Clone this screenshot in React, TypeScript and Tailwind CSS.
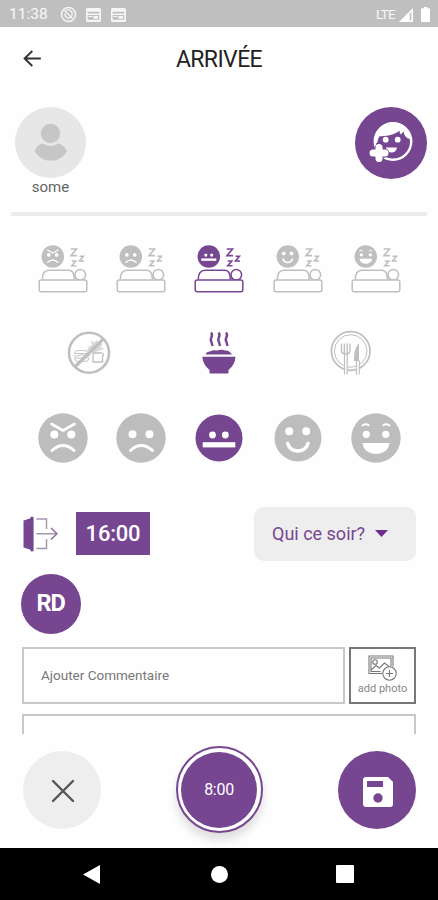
import { useState } from 'react';
import clsx from 'clsx';

type Humeur = 'fache' | 'triste' | 'neutre' | 'content' | 'joyeux';
type Repas = 'rien' | 'peu' | 'tout';

const humeurs: Humeur[] = ['fache', 'triste', 'neutre', 'content', 'joyeux'];
const repas: Repas[] = ['rien', 'peu', 'tout'];

// Traits du visage, dessines autour de (0, 0) dans un cercle de rayon 24
function Traits({ humeur }: { humeur: Humeur }) {
  const trait = { fill: 'none', stroke: 'white', strokeWidth: 3, strokeLinecap: 'round' as const };
  switch (humeur) {
    case 'fache':
      return (
        <>
          <path d="M-11.5-14 0-7.5 11.5-14" {...trait} strokeLinejoin="round" strokeWidth={2.6} />
          <circle cx="-8.7" cy="-3.5" r="4" fill="white" />
          <circle cx="8.3" cy="-3.5" r="4" fill="white" />
          <path d="M-11 12.5Q0 2.5 11 12.5" {...trait} />
        </>
      );
    case 'triste':
      return (
        <>
          <circle cx="-8.5" cy="-3.7" r="4" fill="white" />
          <circle cx="8.5" cy="-3.7" r="4" fill="white" />
          <path d="M-10.5 12.5Q0 2.5 11.5 12.5" {...trait} />
        </>
      );
    case 'neutre':
      return (
        <>
          <circle cx="-6.5" cy="-3" r="3.4" fill="white" />
          <circle cx="6.3" cy="-3" r="3.4" fill="white" />
          <rect x="-16.3" y="4.2" width="32.6" height="5.2" fill="white" />
        </>
      );
    case 'content':
      return (
        <>
          <circle cx="-8.8" cy="-6.7" r="4" fill="white" />
          <circle cx="8.2" cy="-6.7" r="4" fill="white" />
          <path d="M-10.3 5.5C-7 15.5 7 15.5 10 5.5" {...trait} strokeWidth={3.6} />
        </>
      );
    case 'joyeux':
      return (
        <>
          <path d="M-13.5-12.5Q-10.5-14.5-7.5-13M7.5-13Q10.5-14.5 13.5-12.5" {...trait} strokeWidth={2} />
          <circle cx="-9.7" cy="-3.7" r="3.6" fill="white" />
          <circle cx="9.8" cy="-3.7" r="3.6" fill="white" />
          <path d="M-13.5 5H13.5C12.5 19.5-12.5 19.5-13.5 5Z" fill="white" />
        </>
      );
  }
}

function Visage({ humeur }: { humeur: Humeur }) {
  const rayon = humeur === 'neutre' || humeur === 'content' ? 23.5 : 24.7;
  return (
    <svg className="size-[50px]" viewBox="-25 -25 50 50">
      <circle r={rayon} fill="currentColor" />
      <Traits humeur={humeur} />
    </svg>
  );
}

function Sommeil({ humeur }: { humeur: Humeur }) {
  return (
    <svg className="size-[50px]" viewBox="0 0 50 50" fill="none" stroke="currentColor" strokeWidth="1.5">
      <g transform="translate(14.8 12.5) scale(.46)" stroke="none">
        <circle r="24.5" fill="currentColor" />
        <Traits humeur={humeur} />
      </g>
      <path d="M32.8 5H38.5L33 11.6H39M41.5 12.2H45.4L41.5 17H46M33.8 17H37.8L33.8 21.8H38.5" strokeWidth="1.6" />
      <path d="M4.3 35.5C4.3 30 6.5 26.2 11 26.2H31C34.5 26.2 36.3 29 36.3 35.5" />
      <path d="M36.3 31Q37.5 32 38 35.5" strokeWidth="1" />
      <circle cx="42.3" cy="30.7" r="5.3" />
      <rect x="1.2" y="36" width="47.6" height="11.8" rx="2" fill="white" />
    </svg>
  );
}

function IconeRepas({ type }: { type: Repas }) {
  if (type === 'rien') {
    return (
      <svg className="size-[50px]" viewBox="0 0 50 50" fill="none" stroke="currentColor" strokeWidth=".9">
        <path d="M10.5 25.5Q10.5 22.5 15 22.5H20Q24 22.5 25 25.5ZM9.5 27.5Q12 29 15 27.5T21 27.5 26 27.5M10.5 30H25Q25 33.5 21 33.5H14Q11 33.5 10.5 30" />
        <path d="M29 25H36Q39.5 24.5 39.5 27L38.5 28.5V34H29Z" strokeWidth="1.3" />
        <path
          d="M23 22 25 18.5 28 17.5 27 12.5 30.5 14.5 33 12 34.5 16 39 15.5 36.5 19 40.5 21 35 22.5 31 24.5 27 23.5Z"
          fill="currentColor" stroke="none" opacity=".6"
        />
        <path d="M10.8 39 39.5 10.8" strokeWidth="3.2" />
        <circle cx="25" cy="24.8" r="20" strokeWidth="2.6" />
      </svg>
    );
  }
  if (type === 'peu') {
    return (
      <svg className="size-[50px]" viewBox="0 0 50 50" fill="currentColor">
        <path
          d="M17 4.5C20.5 8.5 14.5 10 17.5 14L18.5 18M24.5 4.5C28 8.5 22 10 25 14L26 18M32 4.5C35.5 8.5 29.5 10 32.5 14L33.5 18"
          fill="none" stroke="currentColor" strokeWidth="2.4"
        />
        <path d="M11.5 26.5Q12.5 23.5 16 23.5Q19 21.5 23 22.5Q28 21 31 22.5Q35 22 38 26.5Z" />
        <path d="M8.3 28.8H41.5Q41 37 34.5 42V44.5Q34.5 45.5 33.5 45.5H16.5Q15.5 45.5 15.5 44.5V42Q9 37 8.3 28.8Z" />
      </svg>
    );
  }
  return (
    <svg className="size-[50px]" viewBox="0 0 50 50" fill="none" stroke="currentColor">
      <circle cx="25.7" cy="23" r="19.3" strokeWidth="1.7" />
      <circle cx="25.7" cy="23" r="16.3" strokeWidth="1" />
      <path d="M18.8 29H22.8V46.5H18.8ZM31.5 32H34.5V46.5H31.5Z" fill="white" stroke="none" />
      <path d="M16.5 15.5V22.5Q16.5 26 20.8 26T25 22.5V15.5M19.4 15.5V26M22.2 15.5V26" strokeWidth="1.4" />
      <path d="M19.5 26V46.5M22.2 26V46.5M31.5 32.5V46.5M34.3 32.5V46.5" strokeWidth="1.2" />
      <path d="M34 15V33H29Q28.5 21 34 15Z" fill="currentColor" stroke="none" />
    </svg>
  );
}

function BarreStatut() {
  return (
    <div className="flex h-[27px] shrink-0 items-center bg-[#bfbfbf] pl-[9px] pr-[8px] pt-0.5 text-white">
      <span className="w-[40px] whitespace-nowrap text-[15.5px] leading-none text-white/90">11:38</span>
      <svg className="ml-[11px] size-[17px]" viewBox="0 0 17 17" fill="none" stroke="white" strokeOpacity=".85">
        <circle cx="8.5" cy="8.5" r="7" strokeWidth="1.5" />
        <path d="M5 6Q8 1 12 6.5Q13 11 9 11.5M4.5 4.5 12.5 12.5M4.8 7.5Q5 11.5 9 12.5" strokeWidth="1.3" />
      </svg>
      {[0, 1].map((i) => (
        <svg key={i} className={clsx('h-[14px] w-[15px]', i === 0 ? 'ml-[9px]' : 'ml-[10px]')} viewBox="0 0 15 14">
          <path
            fill="white" fillOpacity=".85" fillRule="evenodd"
            d="M1.5 0H13.5Q15 0 15 1.5V12.5Q15 14 13.5 14H1.5Q0 14 0 12.5V1.5Q0 0 1.5 0ZM1.7 3.7V5.5H13.3V3.7ZM1.7 7V11.8H13.3V7ZM7.5 8H12V10.8H7.5ZM2.5 8H6.5V9H2.5Z"
          />
        </svg>
      ))}
      <span className="ml-auto text-[13px] leading-none tracking-[-0.5px] text-white/90">LTE</span>
      <svg className="ml-[4px] size-[14px]" viewBox="0 0 14 14">
        <path d="M0 14 14 0V14Z" fill="white" />
        <path d="M10.7 5.5V12.5H12.3V4Z" fill="#bfbfbf" />
      </svg>
      <svg className="ml-[8px] h-[15px] w-[9px]" viewBox="0 0 9 15">
        <path d="M2.7 0H6.3V1.3H8Q9 1.3 9 2.3V14Q9 15 8 15H1Q0 15 0 14V2.3Q0 1.3 1 1.3H2.7Z" fill="white" />
      </svg>
    </div>
  );
}

function IconeAjoutEnfant() {
  return (
    <svg className="size-[72px]" viewBox="0 0 72 72">
      <circle cx="38" cy="34.5" r="18.2" fill="none" stroke="white" strokeWidth="2.4" />
      <path
        d="M19 36C19.5 23 28 15.5 38 15.5C48 15.5 55 22 56.5 32L53 31.5C50.5 30 49 28 48.5 24.5L46 27.5C45 26.5 44.5 25.5 44.5 23.5C39 28.5 30 29 24 29.5L22 36Z"
        fill="white"
      />
      <circle cx="30.7" cy="32.7" r="2.9" fill="white" />
      <circle cx="42.7" cy="32.7" r="2.9" fill="white" />
      <path d="M31 40.5H42Q41 46 35.5 45.5L31 43.5Z" fill="white" />
      <path d="M24 41.5V50.5M18.5 46H29.5" stroke="#774691" strokeWidth="9.5" strokeLinecap="round" />
      <path d="M24 40.5V51.5M18 46H30" stroke="white" strokeWidth="7" strokeLinecap="round" />
    </svg>
  );
}

export default function App() {
  const [sommeil, setSommeil] = useState<Humeur>('neutre');
  const [appetit, setAppetit] = useState<Repas>('peu');
  const [moral, setMoral] = useState<Humeur>('neutre');

  return (
    <div className="flex h-[900px] w-[438px] flex-col overflow-hidden bg-[#fefefe] font-['Roboto',sans-serif]">
      <BarreStatut />

      <header className="grid h-[64px] shrink-0 grid-cols-[60px_1fr_60px] items-center">
        <button className="ml-[23px] w-[18px]">
          <svg className="h-[18px] w-[18px]" viewBox="0 0 18 18" fill="none" stroke="#333" strokeWidth="1.9">
            <path d="M9.3 1 1.6 8.5 9.3 16M1.6 8.5H17.8" />
          </svg>
        </button>
        <h1 className="text-center text-[23px] leading-none tracking-[-0.6px] text-[#222]">ARRIVÉE</h1>
      </header>

      {/* Enfant selectionne */}
      <section className="flex h-[121px] shrink-0 justify-between pl-[15px] pr-[11px] pt-[15.5px]">
        <div className="flex flex-col items-center">
          <div className="flex size-[71px] items-center justify-center rounded-full bg-[#e7e7e7]">
            <svg className="size-[71px]" viewBox="0 0 71 71" fill="#c6c6c6">
              <circle cx="35.5" cy="26.5" r="9.7" />
              <path d="M19.5 44C22 38.5 26 36 29 37Q35.5 41 42 37C46 36 49 39 52 44C45 57 27 57 19.5 44Z" />
            </svg>
          </div>
          <span className="mt-[2px] text-[15px] leading-[15px] text-[#666]">some</span>
        </div>
        <button className="size-[72px] rounded-full bg-[#774691]">
          <IconeAjoutEnfant />
        </button>
      </section>
      <div className="mx-[11px] h-[4px] shrink-0 bg-[#ececec]" />

      {/* Sommeil, repas et moral */}
      <section className="ml-[23.5px] mr-[22.5px] mt-[28px] grid shrink-0 grid-cols-5">
        {humeurs.map((h) => (
          <button
            key={h}
            onClick={() => setSommeil(h)}
            className={clsx('flex justify-center', sommeil === h ? 'text-[#774691]' : 'text-[#bfbfbf]')}
          >
            <Sommeil humeur={h} />
          </button>
        ))}
      </section>
      <section className="ml-[23.5px] mr-[22.5px] mt-[34px] grid shrink-0 grid-cols-3">
        {repas.map((r) => (
          <button
            key={r}
            onClick={() => setAppetit(r)}
            className={clsx('flex justify-center', appetit === r ? 'text-[#774691]' : 'text-[#bfbfbf]')}
          >
            <IconeRepas type={r} />
          </button>
        ))}
      </section>
      <section className="ml-[23.5px] mr-[22.5px] mt-[35px] grid shrink-0 grid-cols-5">
        {humeurs.map((h) => (
          <button
            key={h}
            onClick={() => setMoral(h)}
            className={clsx('flex justify-center', moral === h ? 'text-[#774691]' : 'text-[#bdbdbd]')}
          >
            <Visage humeur={h} />
          </button>
        ))}
      </section>

      {/* Heure de depart */}
      <section className="mt-[43.5px] flex h-[54px] shrink-0 items-center pl-[23px] pr-[22px]">
        <svg className="h-[36px] w-[35px]" viewBox="0 0 35 36" fill="none" stroke="#a497ad" strokeWidth="1.4">
          <path d="M13.5 3H23.5V13M23.5 23V32.5H13.5M13.5 17.7H33.5" />
          <path d="M28 12 34 17.7 28 23.5" stroke="#8a6a9c" />
          <path d="M.5 4.5 8.5 2V34L.5 31.5Z" fill="#774691" stroke="none" />
          <path d="M9 2V34" stroke="#774691" strokeWidth="3.2" strokeLinecap="round" />
        </svg>
        <div className="ml-[18px] flex h-[43px] w-[74px] items-center justify-center bg-[#774691] text-[22px] font-medium tracking-[-0.2px] text-white">
          16:00
        </div>
        <button className="ml-auto flex h-[54px] w-[162px] items-center rounded-[10px] bg-[#eee] pb-[1px] pl-[18px] text-[18px] text-[#774691]">
          Qui ce soir?
          <svg className="ml-[10px] h-[7px] w-[13px]" viewBox="0 0 13 7">
            <path d="M0 0H13L6.5 7Z" fill="#6b2d8f" />
          </svg>
        </button>
      </section>
      <div className="ml-[20.5px] mt-[13px] flex size-[60px] shrink-0 items-center justify-center rounded-full bg-[#774691] text-[23.5px] font-bold tracking-[-1.2px] text-white">
        RD
      </div>

      {/* Commentaires */}
      <section className="mt-[13px] flex h-[57px] shrink-0 gap-[4px] pl-[22px] pr-[22px]">
        <div className="flex flex-1 items-center border-2 border-[#c8c8c8] pl-[17px] text-[13.5px] text-[#777]">
          Ajouter Commentaire
        </div>
        <button className="flex w-[67px] flex-col items-center border-2 border-[#777] pt-[6px] text-[#888]">
          <svg className="h-[27px] w-[29px]" viewBox="0 0 29 27" fill="none" stroke="#777" strokeWidth="1.1">
            <path d="M14 18.5H1V1H25V11.5M12.5 16.5H3V3H23V11" />
            <circle cx="7" cy="7" r="2.3" />
            <path d="M3 15 8 10.5 11.5 13 16.5 8 23 13" />
            <circle cx="21.5" cy="18.5" r="6.7" fill="white" />
            <path d="M21.5 15V22M18 18.5H25" />
          </svg>
          <span className="text-[11px] leading-[13px]">add photo</span>
        </button>
      </section>
      <div className="mx-[22px] mt-[10px] h-[20px] shrink-0 border-2 border-b-0 border-[#c8c8c8]" />

      {/* Actions */}
      <footer className="flex flex-1 items-center justify-between px-[22.5px] pb-[2px]">
        <button className="flex size-[78px] items-center justify-center rounded-full bg-[#eee]">
          <svg className="ml-[3px] mt-[3px] size-[24px]" viewBox="0 0 24 24" stroke="#555" strokeWidth="2.4" strokeLinecap="round">
            <path d="M2 2 22 22M22 2 2 22" />
          </svg>
        </button>
        <div className="flex size-[87px] items-center justify-center rounded-full border-2 border-[#774691] bg-white shadow-[0_7px_10px_rgba(0,0,0,0.13)]">
          <div className="flex size-[76px] items-center justify-center rounded-full bg-[#774691] pt-[1px] text-[16px] tracking-[-0.3px] text-white">
            8:00
          </div>
        </div>
        <button className="flex size-[78px] items-center justify-center rounded-full bg-[#774691]">
          <svg className="ml-[3px] mt-[4px] size-[30px]" viewBox="0 0 30 30">
            <path d="M3 0H25L30 5V27Q30 30 27 30H3Q0 30 0 27V3Q0 0 3 0Z" fill="white" />
            <rect x="4" y="4" width="16" height="6" fill="#774691" />
            <circle cx="15" cy="21" r="4.7" fill="#774691" />
          </svg>
        </button>
      </footer>

      {/* Navigation systeme */}
      <nav className="flex h-[52px] shrink-0 items-center justify-between bg-black pl-[83px] pr-[84px]">
        <svg className="h-[19px] w-[17px]" viewBox="0 0 17 19">
          <path d="M0 9.5 17 0V19Z" fill="white" />
        </svg>
        <div className="ml-[2px] size-[17px] rounded-full bg-white" />
        <div className="size-[18px] rounded-[1px] bg-white" />
      </nav>
    </div>
  );
}
